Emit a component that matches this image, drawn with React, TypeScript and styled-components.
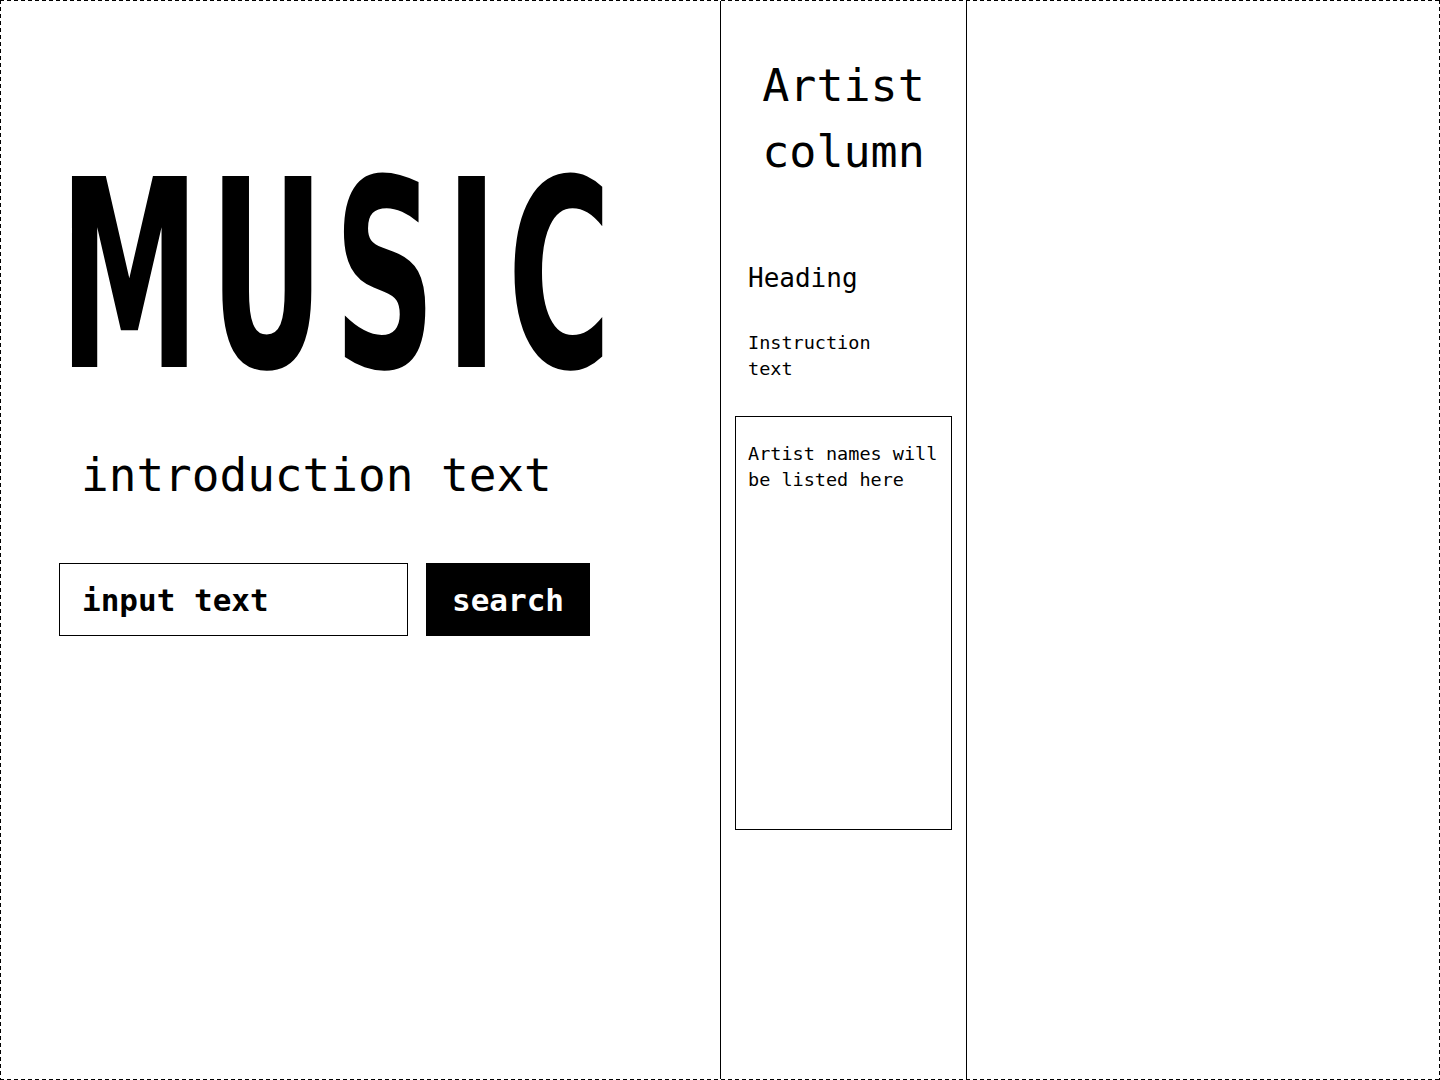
import React from "react";
import styled, { createGlobalStyle } from "styled-components";

const GlobalStyle = createGlobalStyle`
  html, body {
    margin: 0;
    padding: 0;
    background: #ffffff;
  }
  * { box-sizing: border-box; }
`;

const mono = `"DejaVu Sans Mono", "Liberation Mono", monospace`;

const dashH = `repeating-linear-gradient(90deg, #000 0 4px, transparent 4px 7px)`;
const dashV = `repeating-linear-gradient(180deg, #000 0 4px, transparent 4px 7px)`;

const Page = styled.div`
  width: 1440px;
  height: 1080px;
  padding: 1px;
  background:
    ${dashH} left top / 100% 1px no-repeat,
    ${dashH} left bottom / 100% 1px no-repeat,
    ${dashV} left top / 1px 100% no-repeat,
    ${dashV} right top / 1px 100% no-repeat,
    #fff;
  display: grid;
  grid-template-columns: 719px 247px 1fr;
  color: #000;
  font-family: ${mono};
  overflow: hidden;
`;

const SearchColumn = styled.section`
  display: flex;
  flex-direction: column;
  align-items: flex-start;
  padding: 145px 0 0 58px;
`;

const Title = styled.h1`
  margin: 0;
  font-family: "Liberation Sans Narrow", "DejaVu Sans Condensed", "Liberation Sans", sans-serif;
  font-weight: 700;
  font-size: 262px;
  line-height: 1;
  letter-spacing: 16px;
  transform: scaleX(0.6);
  transform-origin: left center;
  white-space: nowrap;
`;

const Intro = styled.p`
  margin: 40px 0 0 22px;
  font-size: 46px;
  line-height: 1.2;
  font-weight: 400;
`;

const SearchRow = styled.form`
  display: flex;
  gap: 18px;
  margin-top: 60px;
`;

const SearchInput = styled.div`
  width: 349px;
  height: 73px;
  border: 1px solid #000;
  display: flex;
  align-items: center;
  padding: 0 0 0 22px;
  font-size: 31px;
  font-weight: 700;
`;

const SearchButton = styled.button`
  width: 164px;
  height: 73px;
  border: none;
  background: #000;
  color: #fff;
  font-family: ${mono};
  font-size: 31px;
  font-weight: 700;
  padding: 0;
  cursor: pointer;
`;

const ArtistColumn = styled.aside`
  border-left: 1px solid #000;
  border-right: 1px solid #000;
  padding: 52px 14px 0 14px;
  display: flex;
  flex-direction: column;
`;

const ColumnTitle = styled.h2`
  margin: 0;
  font-size: 45px;
  line-height: 66px;
  font-weight: 400;
  text-align: center;
`;

const Heading = styled.h3`
  margin: 75px 0 0 13px;
  font-size: 26px;
  line-height: 36px;
  font-weight: 400;
`;

const SmallText = styled.p`
  margin: 0;
  font-size: 18.5px;
  line-height: 26px;
`;

const Instruction = styled(SmallText)`
  margin: 34px 0 0 13px;
`;

const ArtistList = styled.div`
  margin-top: 34px;
  height: 414px;
  border: 1px solid #000;
  padding: 24px 12px 0 12px;
`;

const EmptyColumn = styled.div``;

export default function App() {
  return (
    <>
      <GlobalStyle />
      <Page>
        <SearchColumn>
          <Title>MUSIC</Title>
          <Intro>introduction text</Intro>
          <SearchRow onSubmit={(e) => e.preventDefault()}>
            <SearchInput>input text</SearchInput>
            <SearchButton type="submit">search</SearchButton>
          </SearchRow>
        </SearchColumn>
        <ArtistColumn>
          <ColumnTitle>
            Artist
            <br />
            column
          </ColumnTitle>
          <Heading>Heading</Heading>
          <Instruction>
            Instruction
            <br />
            text
          </Instruction>
          <ArtistList>
            <SmallText>
              Artist names will
              <br />
              be listed here
            </SmallText>
          </ArtistList>
        </ArtistColumn>
        <EmptyColumn />
      </Page>
    </>
  );
}
